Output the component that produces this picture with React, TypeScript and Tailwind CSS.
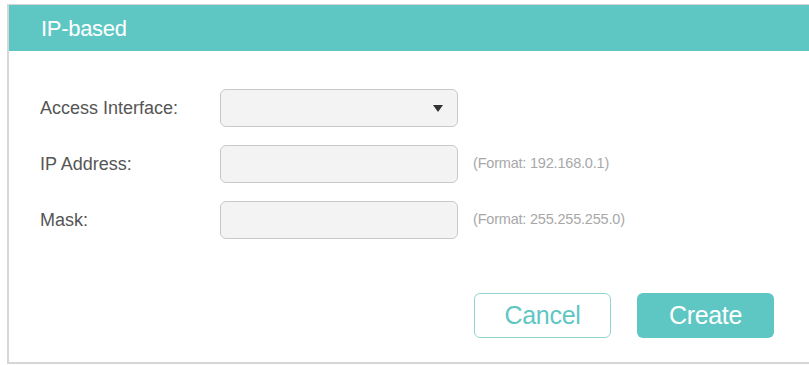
import React from "react";

const font = { fontFamily: '"Liberation Sans", Arial, sans-serif' };

function Row({ label, children, hint }: { label: string; children: React.ReactNode; hint?: string }) {
  return (
    <div className="flex items-center h-[38px]">
      <div className="w-[180px] text-[18px] text-[#555]">{label}</div>
      <div className="w-[238px] h-[38px]">{children}</div>
      {hint && <div className="ml-[15px] text-[14.5px] text-[#a8a8a8] tracking-[-0.2px]">{hint}</div>}
    </div>
  );
}

export default function App() {
  return (
    <div className="w-[809px] h-[365px] bg-white pt-[4px] pl-[7px] overflow-hidden" style={font}>
      <div className="h-[360px] border-l-2 border-t border-b-2 border-[#d6d6d6] flex flex-col">
        <div className="h-[46px] bg-[#5ec7c3] flex items-center pl-[32px] text-white text-[22px] tracking-[-0.3px]">
          IP-based
        </div>
        <div className="flex-1 pl-[31px] pt-[38px] flex flex-col">
          <div className="flex flex-col gap-[18px]">
            <Row label="Access Interface:">
              <div className="h-full rounded-[6px] border border-[#c9c9c9] bg-[#f3f3f3] flex items-center justify-end pr-[14px]">
                <svg width="10" height="7" viewBox="0 0 10 7">
                  <path d="M0 0 L10 0 L5 7 Z" fill="#333" />
                </svg>
              </div>
            </Row>
            <Row label="IP Address:" hint="(Format: 192.168.0.1)">
              <div className="h-full rounded-[6px] border border-[#c9c9c9] bg-[#f3f3f3]" />
            </Row>
            <Row label="Mask:" hint="(Format: 255.255.255.0)">
              <div className="h-full rounded-[6px] border border-[#c9c9c9] bg-[#f3f3f3]" />
            </Row>
          </div>
          <div className="flex pl-[434px] mt-[54px] gap-[26px]">
            <button className="w-[137px] h-[45px] rounded-[6px] border border-[#8fd6d3] bg-white text-[#5ec7c3] text-[25px] tracking-[-0.3px]">
              Cancel
            </button>
            <button className="w-[137px] h-[45px] rounded-[6px] bg-[#5ec7c3] text-white text-[25px] tracking-[-0.3px]">
              Create
            </button>
          </div>
        </div>
      </div>
    </div>
  );
}
